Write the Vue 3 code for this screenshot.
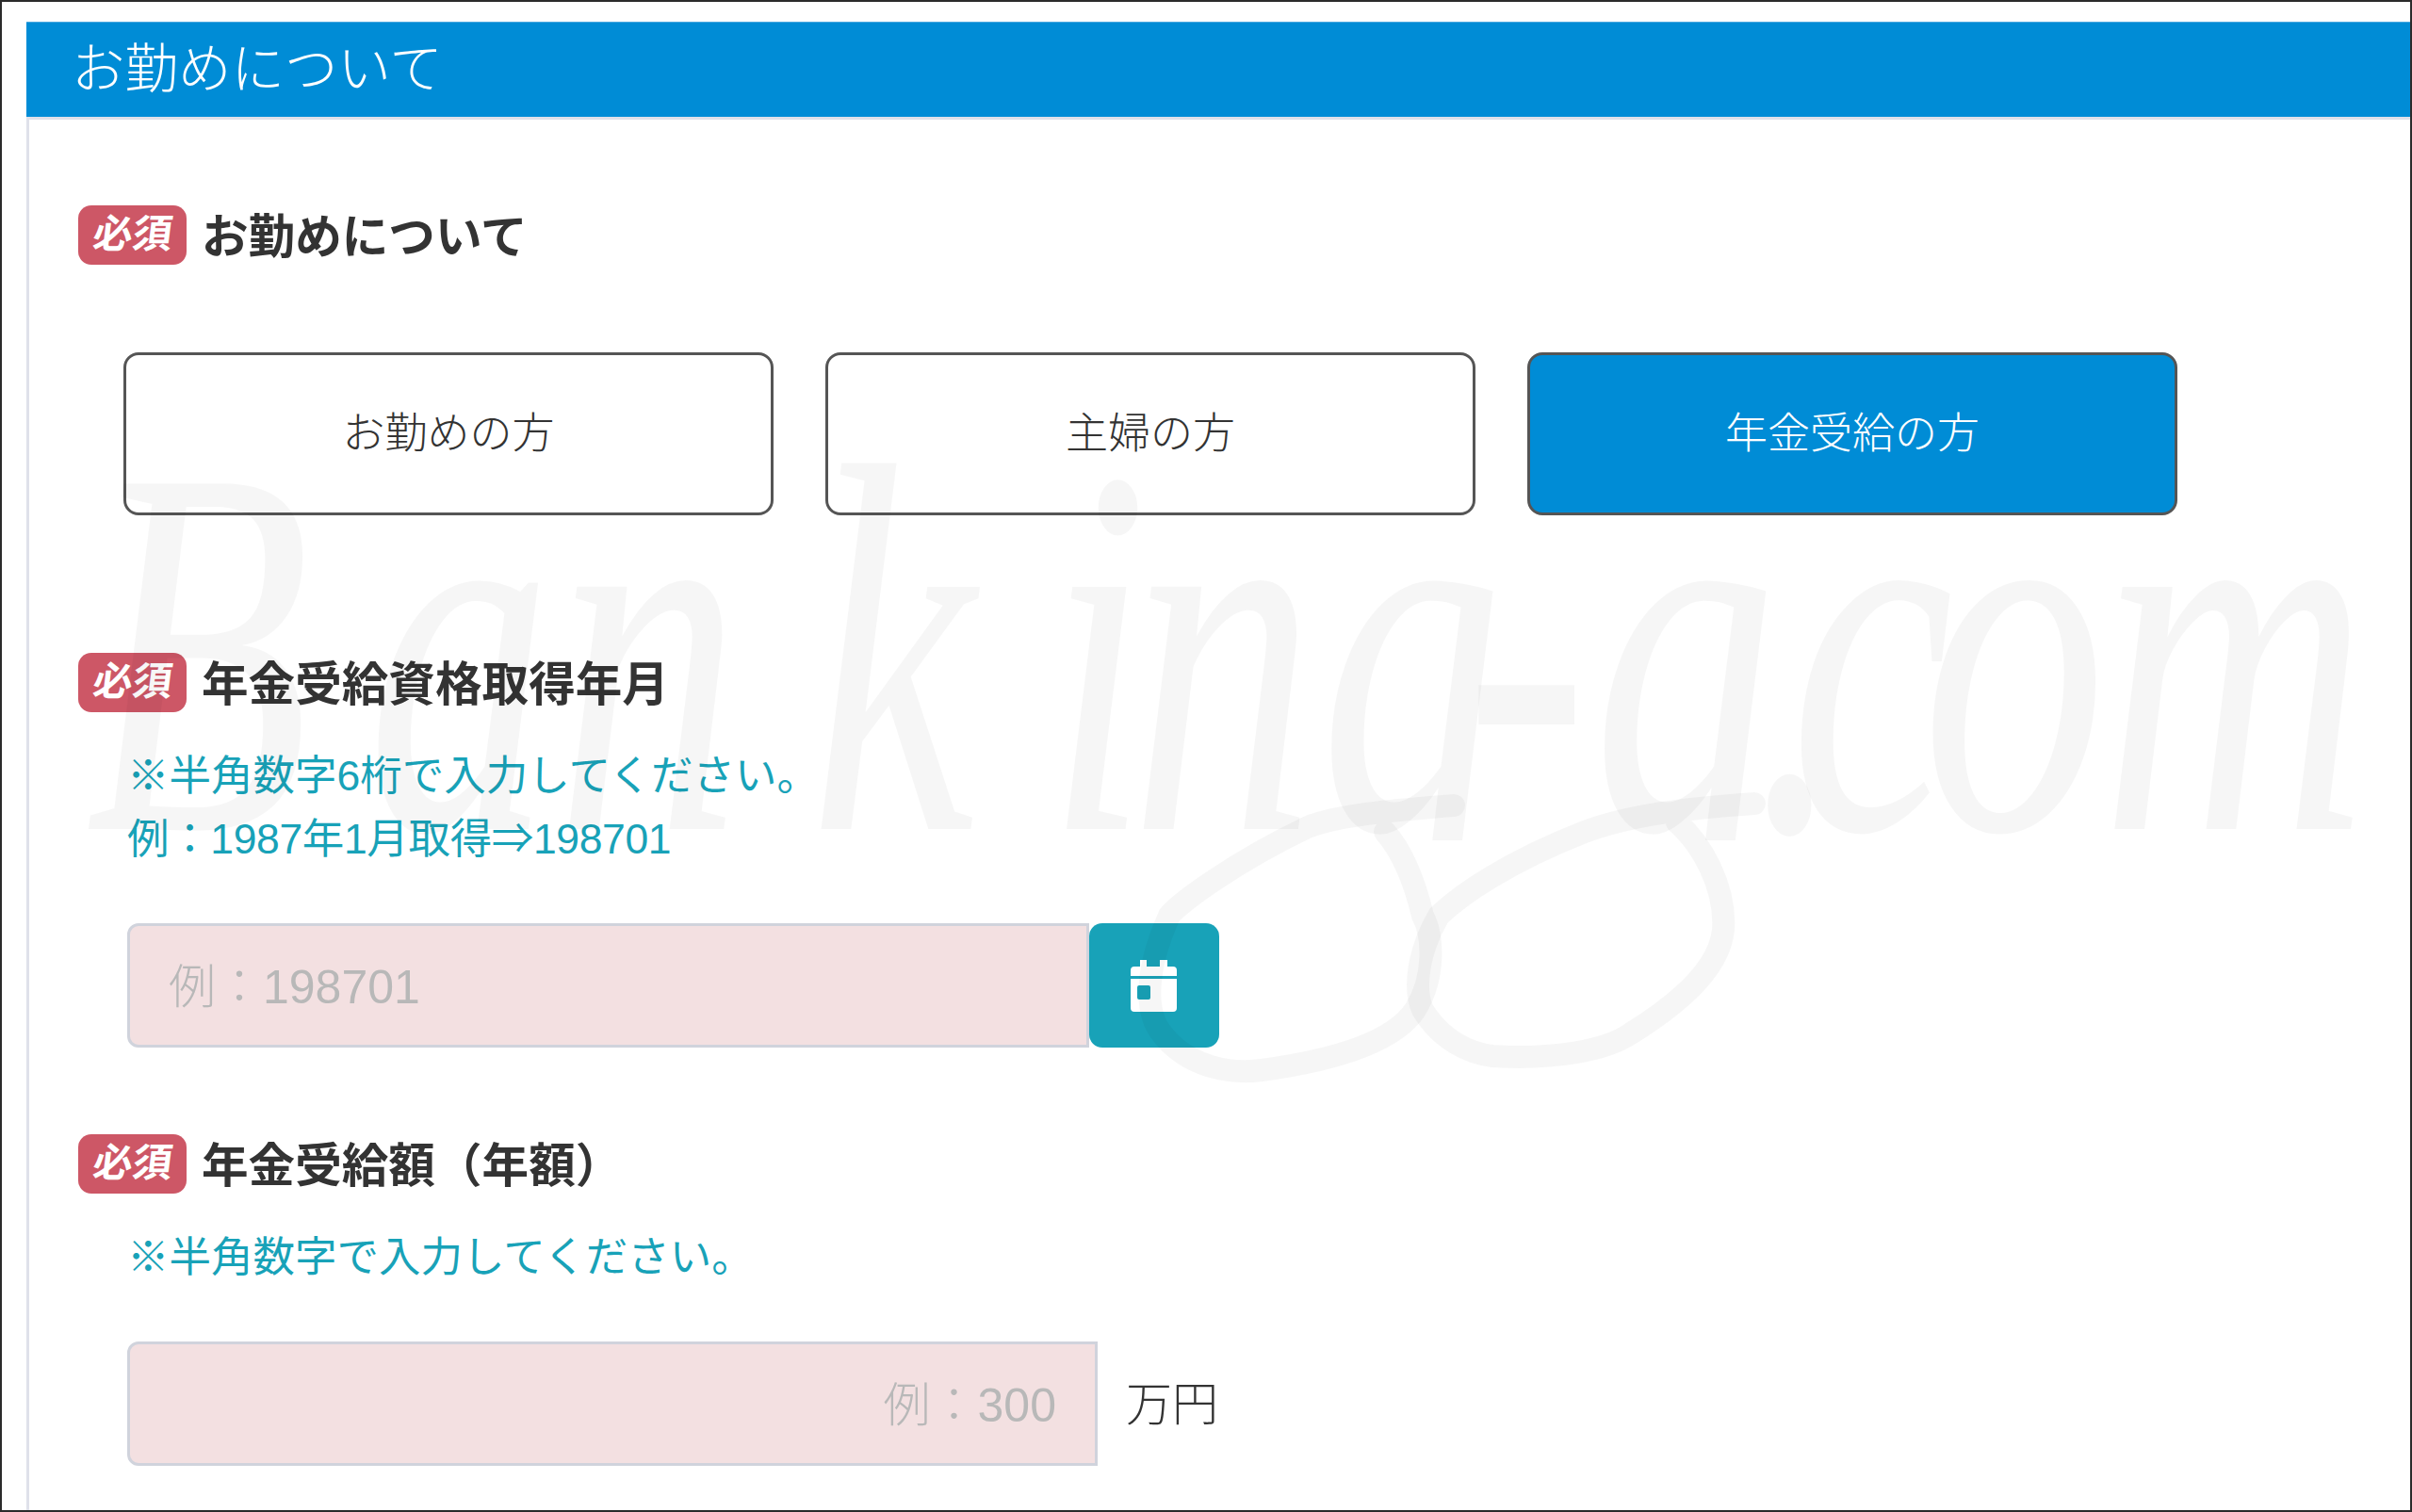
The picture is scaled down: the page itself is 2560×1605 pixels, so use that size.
<script setup>
const choices = [
  { label: 'お勤めの方', active: false },
  { label: '主婦の方', active: false },
  { label: '年金受給の方', active: true },
]
</script>

<template>
  <div class="page">
    <header class="band">お勤めについて</header>
    <main class="content">
      <div class="field-title">
        <span class="badge"><span class="badge-text">必須</span></span>
        <h2>お勤めについて</h2>
      </div>
      <div class="choices">
        <div v-for="c in choices" :key="c.label" class="choice" :class="{ active: c.active }">{{ c.label }}</div>
      </div>

      <div class="field-title second">
        <span class="badge"><span class="badge-text">必須</span></span>
        <h2>年金受給資格取得年月</h2>
      </div>
      <p class="note">※半角数字6桁で入力してください。<br><span class="example">例：1987年1月取得⇒198701</span></p>
      <div class="input-row">
        <div class="input date">例：198701</div>
        <div class="cal">
          <svg class="cal-icon" width="49" height="55" viewBox="0 0 49 55">
            <path fill="#fff" d="M10 0h7v7h14V0h8v7h6a4 4 0 0 1 4 4v6H0v-6a4 4 0 0 1 4-4h6zM0 20h49v31a4 4 0 0 1-4 4H4a4 4 0 0 1-4-4z" />
            <rect x="7" y="27" width="14" height="15" rx="2" fill="#18a2b8" />
          </svg>
        </div>
      </div>

      <div class="field-title third">
        <span class="badge"><span class="badge-text">必須</span></span>
        <h2>年金受給額（年額）</h2>
      </div>
      <p class="note">※半角数字で入力してください。</p>
      <div class="input-row">
        <div class="input amount">例：300</div>
        <span class="unit">万円</span>
      </div>
    </main>

    <svg class="watermark" width="2560" height="1605" viewBox="0 0 2560 1605">
      <defs>
        <clipPath id="wm-clip"><rect x="0" y="0" width="3800" height="892" /></clipPath>
      </defs>
      <g transform="scale(0.7 1)" clip-path="url(#wm-clip)">
        <text x="129 557 843 1229 1586 1714 2000 2221 2414 2657 2714 2914 3186" y="880" class="wm-text">Banking-g.com</text>
      </g>
      <path class="wm-stroke" d="M1543 855C1480 860 1420 865 1388 878C1310 915 1250 960 1241 972C1215 1030 1215 1075 1233 1097C1262 1135 1310 1140 1339 1136C1420 1125 1480 1105 1502 1072C1525 1035 1520 990 1510 972C1500 930 1485 900 1470 883" />
      <path class="wm-stroke" d="M1862 853C1790 858 1730 865 1682 883C1600 915 1550 950 1527 972C1505 1010 1500 1050 1510 1072C1530 1105 1560 1118 1584 1121C1650 1125 1705 1115 1731 1097C1790 1060 1825 1025 1829 987C1832 940 1805 895 1780 873" />
    </svg>
  </div>
</template>

<style>
html, body { margin: 0; background: #fff; }
</style>

<style scoped>
.page {
  position: relative;
  box-sizing: border-box;
  width: 2560px;
  height: 1605px;
  border: 2px solid #2b2b2b;
  padding: 21px 0 0 26px;
  overflow: hidden;
  font-family: "Liberation Sans", "Noto Sans CJK JP", sans-serif;
  color: #333;
}
.band {
  box-sizing: border-box;
  height: 104px;
  padding: 0 0 12px 48px;
  display: flex;
  align-items: center;
  background: #008cd6;
  border-top: 1px solid #4aa9e0;
  border-bottom: 3px solid #dfe1ea;
  color: #fff;
  font-size: 56.5px;
  font-weight: 300;
}
.content {
  border-left: 3px solid #dfe1ea;
  padding: 91px 0 0 52px;
  height: 1400px;
}
.field-title {
  display: flex;
  align-items: center;
  gap: 16px;
}
.field-title.second { margin-top: 146px; }
.field-title.third { margin-top: 92px; }
.badge {
  width: 115px;
  height: 63px;
  border-radius: 14px;
  background: #cd5766;
  color: #fff;
  display: flex;
  align-items: center;
  justify-content: center;
}
.badge-text {
  display: inline-block;
  font-size: 42px;
  font-weight: 700;
  line-height: 55px;
  margin: 0 0 3px 2px;
  transform: skewX(-7deg);
}
h2 {
  margin: 0;
  height: 63px;
  font-size: 49.6px;
  font-weight: 700;
  line-height: 69px;
  color: #333;
}
.choices {
  display: flex;
  gap: 55px;
  margin: 93px 0 0 48px;
}
.choice {
  box-sizing: border-box;
  width: 690px;
  height: 173px;
  border: 3px solid #555;
  border-radius: 16px;
  padding-bottom: 9px;
  display: flex;
  align-items: center;
  justify-content: center;
  font-size: 45px;
  font-weight: 300;
  color: #333;
}
.choice.active {
  background: #008cd6;
  color: #fff;
}
.note {
  margin: 34px 0 0 52px;
  font-size: 44.5px;
  line-height: 67px;
  font-weight: 400;
  color: #18a2b8;
}
.example {
  letter-spacing: -0.36px;
}
.input-row {
  display: flex;
  align-items: center;
  margin: 56px 0 0 52px;
}
.input {
  box-sizing: border-box;
  height: 132px;
  border: 3px solid #d0d3dc;
  background: #f3e0e1;
  border-radius: 12px 0 0 12px;
  display: flex;
  align-items: center;
  padding-bottom: 7px;
  font-size: 50px;
  font-weight: 300;
  color: #b8b8b8;
}
.input.date {
  width: 1021px;
  padding-left: 41px;
}
.input.amount {
  width: 1030px;
  padding-right: 41px;
  justify-content: flex-end;
}
.cal {
  width: 138px;
  height: 132px;
  border-radius: 14px;
  background: #18a2b8;
  display: flex;
  align-items: center;
  justify-content: center;
}
.cal-icon {
  margin-right: 2px;
}
.unit {
  margin-left: 30px;
  padding-bottom: 8px;
  font-size: 49px;
  font-weight: 300;
  color: #333;
}
.watermark {
  position: absolute;
  left: -2px;
  top: -2px;
  pointer-events: none;
}
.wm-text {
  font-family: "Liberation Serif", serif;
  font-style: italic;
  font-size: 560px;
  fill: #000;
  fill-opacity: 0.035;
}
.wm-stroke {
  fill: none;
  stroke: #000;
  stroke-opacity: 0.035;
  stroke-width: 24;
  stroke-linecap: round;
}
</style>
